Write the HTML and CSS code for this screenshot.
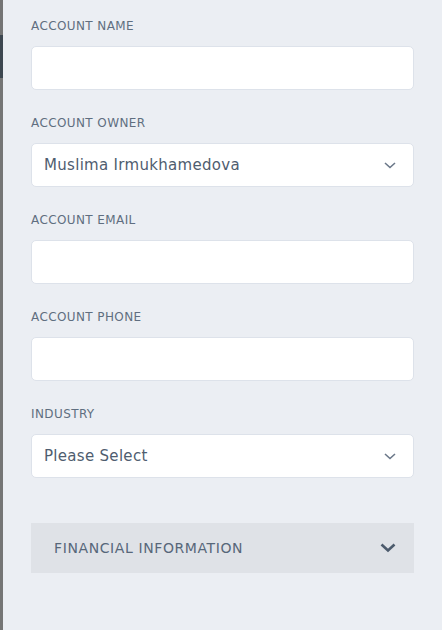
FILE: index.html
```html
<!DOCTYPE html>
<html>
<head>
<meta charset="utf-8">
<link rel="stylesheet" href="styles.css">
</head>
<body>
<div class="page">
  <div class="edge">
    <div class="edge-top"></div>
    <div class="edge-dark"></div>
    <div class="edge-rest"></div>
  </div>
  <form class="form">
    <div class="field">
      <label class="label">ACCOUNT NAME</label>
      <div class="input"></div>
    </div>
    <div class="field">
      <label class="label">ACCOUNT OWNER</label>
      <div class="input select">
        <span class="value">Muslima Irmukhamedova</span>
        <svg class="chev" width="12" height="7" viewBox="0 0 12 7"><path d="M1 1l5 4.5L11 1" fill="none" stroke="#6b7889" stroke-width="1.6"/></svg>
      </div>
    </div>
    <div class="field">
      <label class="label">ACCOUNT EMAIL</label>
      <div class="input"></div>
    </div>
    <div class="field">
      <label class="label">ACCOUNT PHONE</label>
      <div class="input"></div>
    </div>
    <div class="field">
      <label class="label">INDUSTRY</label>
      <div class="input select">
        <span class="value">Please Select</span>
        <svg class="chev" width="12" height="7" viewBox="0 0 12 7"><path d="M1 1l5 4.5L11 1" fill="none" stroke="#6b7889" stroke-width="1.6"/></svg>
      </div>
    </div>
    <div class="section">
      <span class="section-title">FINANCIAL INFORMATION</span>
      <svg class="section-chev" width="16" height="10" viewBox="0 0 16 10"><path d="M1.5 1.5l6.5 6 6.5-6" fill="none" stroke="#4c5b6d" stroke-width="2.6"/></svg>
    </div>
  </form>
</div>
</body>
</html>
```

FILE: styles.css
```css
html, body {
  margin: 0;
  padding: 0;
}
body {
  width: 442px;
  height: 630px;
  overflow: hidden;
  background: #ebeef3;
  font-family: "DejaVu Sans", "Open Sans", sans-serif;
}
.page {
  display: flex;
  height: 630px;
}
.edge {
  width: 3px;
  display: flex;
  flex-direction: column;
}
.edge-top {
  height: 35px;
  background: #747474;
}
.edge-dark {
  height: 43px;
  background: #3d4750;
}
.edge-rest {
  flex: 1;
  background: #757575;
}
.form {
  flex: 1;
  margin: 0;
  padding: 18px 28px 0 28px;
  display: flex;
  flex-direction: column;
  gap: 25px;
}
.field {
  display: flex;
  flex-direction: column;
}
.label {
  font-size: 12px;
  line-height: 16px;
  color: #5f6e80;
  margin-bottom: 12px;
  letter-spacing: 0.4px;
}
.input {
  height: 44px;
  box-sizing: border-box;
  background: #ffffff;
  border: 1px solid #dde2ea;
  border-radius: 5px;
  display: flex;
  align-items: center;
  padding: 0 17px 0 12px;
}
.select {
  justify-content: space-between;
}
.value {
  font-size: 15px;
  color: #4f5d6f;
  letter-spacing: 0.3px;
}
.chev {
  display: block;
}
.section {
  margin-top: 20px;
  height: 50px;
  background: #dfe2e7;
  display: flex;
  align-items: center;
  justify-content: space-between;
  padding: 0 18px 0 23px;
}
.section-title {
  font-size: 14px;
  color: #57677a;
  letter-spacing: 0.6px;
}
.section-chev {
  display: block;
}
```
